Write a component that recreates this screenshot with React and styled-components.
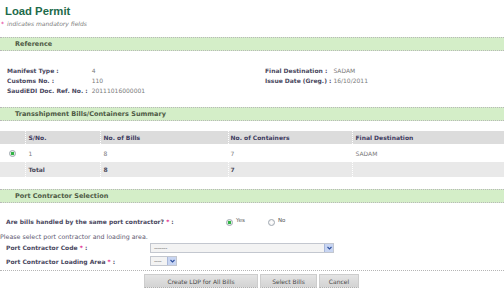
import React from 'react';
import styled, { createGlobalStyle } from 'styled-components';

const GlobalStyle = createGlobalStyle`
  html, body { margin: 0; padding: 0; background: #fff; }
  body { font-family: "DejaVu Sans", Verdana, sans-serif; font-size: 6px; color: #666; }
  * { box-sizing: border-box; }
`;

const Page = styled.div`
  width: 504px;
  height: 289px;
  overflow: hidden;
  display: flex;
  flex-direction: column;
`;

const Title = styled.h1`
  margin: 0;
  padding: 4px 0 0 5px;
  font: bold 11.3px/14px "Liberation Sans", Arial, sans-serif;
  color: #1d6b4b;
`;

const Note = styled.div`
  margin-top: 2px;
  padding-left: 1px;
  line-height: 8px;
  font-style: italic;
  color: #7a7a7a;
`;

const Star = styled.span`
  color: #e0208a;
  font-style: normal;
  margin-right: ${p => (p.$gap ? '3px' : '0')};
`;

const SectionBar = styled.div`
  margin-top: ${p => p.$top}px;
  height: 14px;
  line-height: 12px;
  padding-left: 15px;
  background: #d4eec8;
  border-top: 1px dotted #b8b8b8;
  border-bottom: 1px dotted #b8b8b8;
  font-size: 6.5px;
  font-weight: bold;
  color: #4d5944;
`;

const InfoSection = styled.div`
  margin-top: 14px;
  padding-left: 7px;
  display: grid;
  grid-template-columns: 258px 1fr;
`;

const InfoList = styled.div`
  display: grid;
  grid-template-columns: max-content 1fr;
  grid-auto-rows: 10px;
  column-gap: ${p => p.$gap}px;
  align-items: center;
`;

const InfoLabel = styled.span`
  font-weight: bold;
  color: #4a4860;
`;

const InfoValue = styled.span`
  color: #7a7a7a;
`;

const Table = styled.table`
  margin-top: 10px;
  width: 504px;
  border-collapse: collapse;
  table-layout: fixed;
`;

const HeadRow = styled.tr`
  height: 13px;
  background: #dcdcdc;
`;

const BodyRow = styled.tr`
  height: ${p => (p.$total ? 15 : 18)}px;
  background: ${p => (p.$total ? '#e9e9e9' : '#fff')};
`;

const Th = styled.th`
  padding: 0 0 0 ${p => p.$pad ?? 3}px;
  text-align: left;
  font-weight: bold;
  color: #3e3b5e;
  border-left: ${p => (p.$first ? 'none' : '1px dotted #fff')};
`;

const Td = styled.td`
  padding: 0 0 0 ${p => p.$pad ?? 3}px;
  text-align: ${p => (p.$center ? 'center' : 'left')};
  font-weight: ${p => (p.$bold ? 'bold' : 'normal')};
  color: ${p => (p.$bold ? '#4a4a5a' : '#7a7a7a')};
  border-left: ${p => (p.$first ? 'none' : '1px dotted #fff')};
`;

const Radio = styled.span`
  display: inline-block;
  flex: none;
  width: 7px;
  height: 7px;
  border-radius: 50%;
  border: 1px solid #9fa7b1;
  background: ${p =>
    p.$checked
      ? 'radial-gradient(circle, #2fb344 0 1.4px, #dfeee0 1.9px, #f4f4f4 100%)'
      : 'radial-gradient(circle, #ffffff 0, #ededed 100%)'};
  vertical-align: middle;
`;

const QuestionRow = styled.div`
  margin-top: 13px;
  padding-left: 6px;
  height: 10px;
  display: grid;
  grid-template-columns: 220px auto;
  align-items: center;
`;

const FieldLabel = styled.span`
  font-weight: bold;
  color: #4a4860;
`;

const RadioGroup = styled.div`
  display: flex;
  align-items: center;
`;

const Option = styled.label`
  display: flex;
  align-items: flex-start;
  width: ${p => p.$w}px;
  gap: 3px;
  font-size: 5.5px;
  color: #555;
  ${Radio} { margin-top: 2px; }
`;

const Hint = styled.div`
  margin-top: 7px;
  line-height: 8px;
  font-size: 6.3px;
  color: #5d5870;
`;

const FieldRow = styled.div`
  margin-top: ${p => p.$top}px;
  padding-left: 6px;
  height: ${p => p.$h}px;
  display: grid;
  grid-template-columns: 144px auto;
  align-items: center;
`;

const SelectBox = styled.div`
  width: ${p => p.$w}px;
  height: ${p => p.$h}px;
  display: flex;
  border: 1px solid #c3c7cf;
  background: #f3f3f3;
`;

const SelectValue = styled.span`
  flex: 1;
  padding-left: 3px;
  line-height: ${p => p.$h - 2}px;
  color: #666;
  letter-spacing: -0.3px;
`;

const SelectArrow = styled.span`
  width: 9px;
  display: flex;
  align-items: center;
  justify-content: center;
  background: #c8d5f2;
  border-left: 1px solid #a9b8da;
`;

const Divider = styled.div`
  margin-top: 4px;
  border-bottom: 1px dotted #b5b5b5;
`;

const ButtonRow = styled.div`
  margin-top: 3px;
  padding-left: 144px;
  display: flex;
  gap: 2px;
`;

const Button = styled.button`
  width: ${p => p.$w}px;
  height: 14px;
  padding: 0;
  font-family: "DejaVu Sans", Verdana, sans-serif;
  font-size: 6px;
  color: #4a4a4a;
  background: linear-gradient(#e4e4e4, #d3d3d3);
  border: 1px solid #cdcdcd;
  border-bottom: 1px dotted #b0b0b0;
`;

const Chevron = () => (
  <svg width="5" height="4" viewBox="0 0 5 4">
    <path d="M0.5 1 L2.5 3 L4.5 1" fill="none" stroke="#2d4f9e" strokeWidth="1.1" />
  </svg>
);

const Select = ({ w, h, value }) => (
  <SelectBox $w={w} $h={h}>
    <SelectValue $h={h}>{value}</SelectValue>
    <SelectArrow>
      <Chevron />
    </SelectArrow>
  </SelectBox>
);

export default function App() {
  return (
    <Page>
      <GlobalStyle />
      <Title>Load Permit</Title>
      <Note>
        <Star $gap>*</Star>indicates mandatory fields
      </Note>

      <SectionBar $top={9}>Reference</SectionBar>
      <InfoSection>
        <InfoList $gap={4}>
          <InfoLabel>Manifest Type :</InfoLabel>
          <InfoValue>4</InfoValue>
          <InfoLabel>Customs No. :</InfoLabel>
          <InfoValue>110</InfoValue>
          <InfoLabel>SaudiEDI Doc. Ref. No. :</InfoLabel>
          <InfoValue>20111016000001</InfoValue>
        </InfoList>
        <InfoList $gap={2}>
          <InfoLabel>Final Destination :</InfoLabel>
          <InfoValue>SADAM</InfoValue>
          <InfoLabel>Issue Date (Greg.) :</InfoLabel>
          <InfoValue>16/10/2011</InfoValue>
        </InfoList>
      </InfoSection>

      <SectionBar $top={12}>Transshipment Bills/Containers Summary</SectionBar>
      <Table>
        <colgroup>
          <col style={{ width: 25 }} />
          <col style={{ width: 75 }} />
          <col style={{ width: 128 }} />
          <col style={{ width: 124 }} />
          <col style={{ width: 152 }} />
        </colgroup>
        <thead>
          <HeadRow>
            <Th $first />
            <Th>S/No.</Th>
            <Th>No. of Bills</Th>
            <Th $pad={2}>No. of Containers</Th>
            <Th>Final Destination</Th>
          </HeadRow>
        </thead>
        <tbody>
          <BodyRow>
            <Td $first $center $pad={0}>
              <Radio $checked />
            </Td>
            <Td>1</Td>
            <Td>8</Td>
            <Td $pad={2}>7</Td>
            <Td>SADAM</Td>
          </BodyRow>
          <BodyRow $total>
            <Td $first />
            <Td $bold>Total</Td>
            <Td $bold>8</Td>
            <Td $bold $pad={2}>7</Td>
            <Td />
          </BodyRow>
        </tbody>
      </Table>

      <SectionBar $top={12}>Port Contractor Selection</SectionBar>
      <QuestionRow>
        <FieldLabel>
          Are bills handled by the same port contractor? <Star>*</Star> :
        </FieldLabel>
        <RadioGroup>
          <Option $w={42}>
            <Radio $checked />
            Yes
          </Option>
          <Option $w={30}>
            <Radio />
            No
          </Option>
        </RadioGroup>
      </QuestionRow>
      <Hint>Please select port contractor and loading area.</Hint>
      <FieldRow $top={1} $h={11}>
        <FieldLabel>
          Port Contractor Code <Star>*</Star> :
        </FieldLabel>
        <Select w={184} h={10} value="-------" />
      </FieldRow>
      <FieldRow $top={3} $h={10}>
        <FieldLabel>
          Port Contractor Loading Area <Star>*</Star> :
        </FieldLabel>
        <Select w={27} h={10} value="----" />
      </FieldRow>
      <Divider />
      <ButtonRow>
        <Button $w={114}>Create LDP for All Bills</Button>
        <Button $w={57}>Select Bills</Button>
        <Button $w={40}>Cancel</Button>
      </ButtonRow>
    </Page>
  );
}
